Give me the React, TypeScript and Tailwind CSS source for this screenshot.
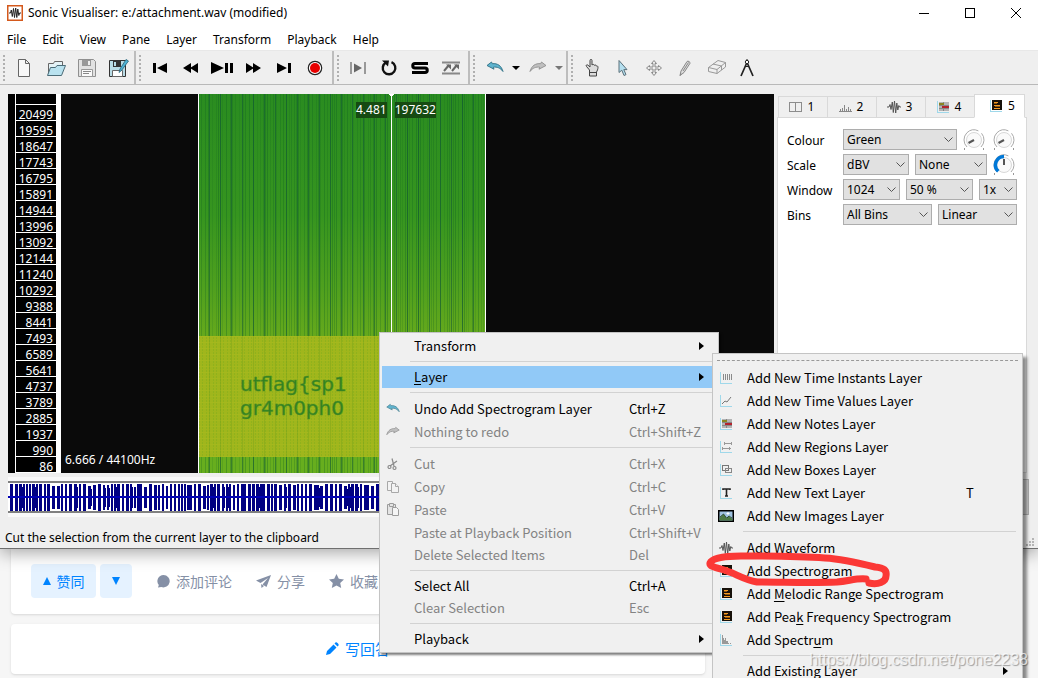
import React, { useState } from 'react';

interface MenuEntry {
  label: string;
  hot?: string;
  shortcut?: string;
  icon?: React.ReactNode;
  disabled?: boolean;
  submenu?: boolean;
  active?: boolean;
  tall?: boolean;
}

const frequencies = [
  20499, 19595, 18647, 17743, 16795, 15891, 14944, 13996, 13092, 12144, 11240, 10292,
  9388, 8441, 7493, 6589, 5641, 4737, 3789, 2885, 1937, 990, 86,
];

const menus = ['File', 'Edit', 'View', 'Pane', 'Layer', 'Transform', 'Playback', 'Help'];

// small deterministic generator so the signal looks the same on every render
const makeRandom = (seed: number) => () => {
  seed = (seed * 1103515245 + 12345) % 2147483648;
  return seed / 2147483648;
};

/* ---------- layer icons ---------- */

const Axes = ({ children }: { children?: React.ReactNode }) => (
  <svg width="16" height="16" viewBox="0 0 16 16" fill="none" shapeRendering="crispEdges">
    <path d="M2.5 2v11.5H14" stroke="#9fd8ea" />
    {children}
  </svg>
);

const InstantsIcon = () => (
  <Axes><path d="M5.5 4v6M7.5 4v6M9.5 4v6M11.5 4v6M13.5 4v6" stroke="#8a8a8a" /></Axes>
);

const ValuesIcon = () => (
  <Axes><path d="M4 11l3-3 2 1 4-5" stroke="#777" shapeRendering="auto" /></Axes>
);

const NotesIcon = () => (
  <Axes>
    <rect x="4" y="3" width="10" height="9" fill="#b4b4b4" />
    <path d="M4 6.5h10M4 9.5h10M8.5 3v9" stroke="#888" />
    <rect x="4" y="4" width="5" height="2" fill="#8a8420" />
    <rect x="7" y="7" width="7" height="2" fill="#b3222c" />
  </Axes>
);

const RegionsIcon = () => (
  <Axes><path d="M6 4.5h8M6.500 3v3M13.5 3v3M4 9.5h9M4.500 8v3M11.5 8v3" stroke="#999" /></Axes>
);

const BoxesIcon = () => (
  <Axes>
    <rect x="4.5" y="3.5" width="6" height="5" stroke="#777" />
    <rect x="7.5" y="6.5" width="6" height="4" rx="1" stroke="#888" />
  </Axes>
);

const TextIcon = () => (
  <Axes><path d="M5 5V4h7v1M8.5 4v7M7 11h3" stroke="#222" strokeWidth="1.6" shapeRendering="auto" /></Axes>
);

const ImageIcon = () => (
  <svg width="16" height="16" viewBox="0 0 16 16">
    <rect x="0.75" y="2.75" width="14.5" height="10.5" fill="#9fc2e0" stroke="#000" strokeWidth="1.5" />
    <path d="M1.5 12.5V10l4-4 3 4 2-2 4 3v1.5z" fill="#4d7a45" />
    <path d="M2 9l3.500-3 3 4M9 10l2-2 3 2" fill="none" stroke="#1f3b22" strokeWidth="0.8" />
    <path d="M10 4v3M8.500 5.500h3" stroke="#fff" />
  </svg>
);

const WaveIcon = () => (
  <svg width="16" height="16" viewBox="0 0 16 16" stroke="#555" fill="none">
    <path d="M1 8h2l1-2.500 1 5L6.300 3l1 10.500L8.500 2l1.200 12L10.800 4l1 7 1-4.500.8 1.500H15" strokeWidth="1" />
  </svg>
);

const SpectrogramIcon = () => (
  <Axes>
    <rect x="4" y="2" width="10" height="10" fill="#17110a" />
    <path d="M6 4.500h4M6 7.500h6M6 10.500h6" stroke="#f29a1f" />
    <path d="M6 5.500h3M7 8.500h5" stroke="#8a5512" />
  </Axes>
);

const SpectrumIcon = () => (
  <Axes><path d="M4.500 12V3M5.500 12V6M6.500 12V8M7.500 12V6M8.500 12v-3M9.500 12V9M10.500 12v-1M12.500 12v-1" stroke="#999" /></Axes>
);

const PaneIcon = () => (
  <svg width="16" height="16" viewBox="0 0 16 16" fill="none" stroke="#8c8c8c" shapeRendering="crispEdges">
    <rect x="1.500" y="3.500" width="12" height="9" /><path d="M7.500 3v10" />
  </svg>
);

const RulerIcon = () => (
  <svg width="16" height="16" viewBox="0 0 16 16" stroke="#888" shapeRendering="crispEdges">
    <path d="M2 12.500h13M3.500 10v2M5.500 9v3M7.500 6v6M9.500 10v2M11.500 8v4M13.500 10v2" />
  </svg>
);

/* ---------- edit icons ---------- */

const UndoIcon = ({ size = 18, fill = '#5fb4cf', stroke = '#2f6f85' }: { size?: number; fill?: string; stroke?: string }) => (
  <svg width={size} height={size} viewBox="0 0 18 18">
    <path d="M1 6.500L5.500 3l.8 1.700c5-.6 9.200 2 10.700 7.800-2.600-3.600-6-4.800-9.700-4.300l.7 2z" fill={fill} stroke={stroke} strokeWidth="0.900" />
  </svg>
);

const RedoIcon = ({ size = 18 }: { size?: number }) => (
  <svg width={size} height={size} viewBox="0 0 18 18">
    <path d="M17 6.500L12.500 3l-.8 1.700C6.700 4.100 2.500 6.700 1 12.500c2.600-3.600 6-4.800 9.700-4.300l-.7 2z" fill="#c0c0c0" stroke="#8f8f8f" strokeWidth="0.900" />
  </svg>
);

const CutIcon = () => (
  <svg width="14" height="14" viewBox="0 0 14 14" fill="none" stroke="#8a8a8a" strokeWidth="1.200">
    <path d="M6 1.500L8 9M11 4L4 9" /><circle cx="3.500" cy="10" r="1.500" /><circle cx="8.500" cy="11" r="1.500" />
  </svg>
);

const CopyIcon = () => (
  <svg width="14" height="14" viewBox="0 0 14 14" fill="#f3f3f3" stroke="#a8a8a8">
    <path d="M1.500 1.500h5v9h-5z" /><path d="M5.500 3.500h4l3 3v6h-7z" /><path d="M9.500 3.500v3h3" />
  </svg>
);

const PasteIcon = () => (
  <svg width="14" height="14" viewBox="0 0 14 14" fill="#e4e4e4" stroke="#9c9c9c">
    <path d="M1.500 1.500h8v10h-8z" /><path d="M3.500.5h4v3h-4z" /><path d="M6.500 4.500h4l2 2v6h-6z" fill="#f5f5f5" />
  </svg>
);

/* ---------- toolbar ---------- */

const tool = (name: string, drawing: React.ReactNode) => ({ name, drawing });

const fileTools = [
  tool('New Session', <path d="M3.500 1.500h7l4 4v13h-11zM10.500 1.500v4h4" fill="#f8f8f8" stroke="#666" />),
  tool('Open', <>
    <path d="M2.500 16.500V5.500h5l1-2h8v4" fill="#e4f2f6" stroke="#666" />
    <path d="M1.500 17.500l3-8h5l1.500-2h8.500l-4 10z" fill="#b9e2ef" stroke="#4b6c78" />
  </>),
  tool('Save', <>
    <path d="M1.500 1.500h15l2 2v15h-17z" fill="#e2e2e2" stroke="#909090" />
    <path d="M5 2h9v6H5z" fill="#999" /><path d="M11 3h2v4h-2z" fill="#eee" />
    <path d="M4.500 11.500h11v7h-11z" fill="#fafafa" stroke="#999" /><path d="M6 13.500h8M6 15.500h6" stroke="#888" />
  </>),
  tool('Save As', <>
    <path d="M1.500 2.500h16v16h-16z" fill="#b9dce6" stroke="#333" />
    <path d="M5 3h8v6H5z" fill="#333" /><path d="M6 4h2v4H6z" fill="#b9dce6" />
    <path d="M4.500 12.500h10v6h-10z" fill="#fff" stroke="#666" />
    <path d="M11 14.500l1-3.500 6-9.500 2.500 1.500-7 9.500z" fill="#4fb4d6" stroke="#276075" strokeWidth="0.800" />
  </>),
];

const playTools = [
  tool('Rewind to Start', <path d="M2 5h3v10H2zM16 5v10l-10-5z" fill="#000" />),
  tool('Rewind', <path d="M9 5v10L1 10zM16 5v10l-8-5z" fill="#000" />),
  tool('Play / Pause', <path d="M-2 4v12l13-6zM12 5h3v10h-3zM17 5h3v10h-3z" fill="#000" />),
  tool('Fast Forward', <path d="M2 5v10l8-5zM9 5v10l8-5z" fill="#000" />),
  tool('Fast Forward to End', <path d="M2 5v10l10-5zM13 5h3v10h-3z" fill="#000" />),
  tool('Record', <>
    <circle cx="9" cy="10" r="6.700" fill="#fff" stroke="#222" strokeWidth="1.200" />
    <circle cx="9" cy="10" r="5" fill="#e80000" />
  </>),
];

const modeTools = [
  tool('Constrain Playback', <><path d="M2 4v12M16 4v12" stroke="#999" strokeWidth="2" /><path d="M5 5.500v9l8-4.500z" fill="#666" /></>),
  tool('Loop Playback', <>
    <path d="M11.500 4.200a6.300 6.300 0 1 1-5.500.3" fill="none" stroke="#111" strokeWidth="2.400" />
    <path d="M2 2.500h7l-1 6z" fill="#111" />
  </>),
  tool('Solo Current Pane', <path d="M17 5.500H4a2 2 0 0 0 0 4.500h10a2.200 2.200 0 0 1 0 4.500H1" fill="none" stroke="#000" strokeWidth="3" />),
  tool('Align File Timelines', <>
    <path d="M0 4.500h18M0 15.500h18" stroke="#888" strokeWidth="2" />
    <path d="M2 13l5-6M10 13l5-6" stroke="#666" strokeWidth="2" />
    <path d="M4 6.500h5v5zM12 6.500h5v5z" fill="#666" />
  </>),
];

const editTools = [
  tool('Navigate', <path d="M6.500 12L3.500 8.500c-1-1.300.4-2.300 1.500-1.300l2 1.800V2.500c0-1.500 2-1.500 2 0V7c1-1 2.200-.6 2.300.3 1-.6 1.900-.2 2 .7 1-.3 1.700.2 1.700 1.200 0 2-.8 3.600-1.500 4.800v4h-7v-4zM6.500 14.500h7" fill="#dcdcdc" stroke="#444" />),
  tool('Select', <path d="M5 2.500v12l2.800-2.300 2.200 5.300 2-.9-2.200-5H13z" fill="#b5dfef" stroke="#5b707a" />),
  tool('Edit', <path d="M9 2.500l2.500 3h-1.500v3.500H13.500V7.500l3 2.500-3 2.500v-1.500H10v3.500h1.500l-2.500 3-2.500-3H8V11H4.500v1.500l-3-2.500 3-2.500V9H8V5.500H6.500z" fill="#eee" stroke="#888" />),
  tool('Draw', <><path d="M4 17.500l1-4.500 6-9.500c1-1 3.500.4 3 1.800l-6 9.200z" fill="#ddd" stroke="#888" /><path d="M7 13l5.500-8.500M4 17.500l1-2" stroke="#888" /></>),
  tool('Erase', <><path d="M1.500 9.500L11 2.500l7.500 2v4.500l-8.500 6.500-8.500-2z" fill="#efefef" stroke="#999" /><path d="M1.500 9.500l8.500 2 8.500-7M10 11.500v4M6 6l8.500 2v4" fill="none" stroke="#999" /></>),
  tool('Measure', <><path d="M8.500 5.500L3 18M9.500 5.500L15 18" stroke="#222" strokeWidth="1.700" /><circle cx="9" cy="4" r="1.700" fill="#fff" stroke="#222" /><path d="M9 1v2M7 8.500h4" stroke="#222" /></>),
];

type Tool = ReturnType<typeof tool>;

const ToolButton = ({ item }: { item: Tool }) => (
  <button aria-label={item.name} className="flex h-8 w-[31px] items-center justify-center">
    <svg width="20" height="20" viewBox="0 0 20 20" className="overflow-visible">{item.drawing}</svg>
  </button>
);

const DropArrow = ({ label, className }: { label: string; className: string }) => (
  <button aria-label={label} className="flex h-8 w-3 items-center justify-center">
    <svg width="8" height="4" viewBox="0 0 8 4" className={className}><path d="M0 0h8L4 4z" fill="currentColor" /></svg>
  </button>
);

const ToolGroup = ({ children, last }: { children: React.ReactNode; last?: boolean }) => (
  <div className={`flex items-center ${last ? '' : 'border-r-2 border-[#bdbdbd] pr-px'}`}>
    <svg width="9" height="28" viewBox="0 0 9 28" shapeRendering="crispEdges">
      <path d="M4 1v27" stroke="#b0b0b0" strokeWidth="2" strokeDasharray="2 2" />
    </svg>
    {children}
  </div>
);

/* ---------- pane ---------- */

function Spectrogram() {
  const rnd = makeRandom(7);
  const stripes: { x: number; o: number; w: number }[] = [];
  for (let x = 1; x < 286; x += 2 + Math.floor(rnd() * 3)) {
    stripes.push({ x, o: 0.12 + rnd() * 0.22, w: 1 });
  }
  const strong: number[] = [];
  for (let x = 11; x < 286; x += 11) strong.push(x);

  return (
    <svg width="288" height="379" viewBox="0 0 288 379" className="block shrink-0" shapeRendering="crispEdges">
      <defs>
        <linearGradient id="noise" x1="0" y1="0" x2="0" y2="1">
          <stop offset="0" stopColor="#2a8c20" />
          <stop offset="0.500" stopColor="#36951f" />
          <stop offset="0.800" stopColor="#4fa01e" />
          <stop offset="1" stopColor="#65a91c" />
        </linearGradient>
        <pattern id="weave" width="7" height="6" patternUnits="userSpaceOnUse">
          <path d="M1.500 0v6M4.500 0v6" stroke="#86b01c" strokeDasharray="2 1" />
          <path d="M0 2.500h7" stroke="#aebc20" opacity="0.500" />
        </pattern>
      </defs>
      <rect width="288" height="242" fill="url(#noise)" />
      <rect y="363" width="288" height="16" fill="#67ae1e" />
      {stripes.map((s) => <rect key={s.x} x={s.x} width={s.w} height="379" fill="#0b5e22" opacity={s.o} />)}
      {strong.map((x) => <rect key={x} x={x} width="1" height="379" fill="#0b4f38" opacity="0.500" />)}
      <rect y="242" width="288" height="121" fill="#a0b61c" />
      <rect y="242" width="288" height="121" fill="url(#weave)" opacity="0.600" />
      {strong.map((x) => <rect key={x} x={x} y="242" width="1" height="121" fill="#6b9a1c" opacity="0.300" />)}
      <g className="font-['DejaVu_Sans',sans-serif] text-xl" fill="#2f8022" stroke="#4f9022" strokeWidth="0.500">
        <text x="42" y="297">utflag&#123;sp1</text>
        <text x="42" y="321">gr4m0ph0</text>
      </g>
      <path d="M0.500 0v379M287.500 0v379M193.500 0v379" stroke="#fff" />
      <path d="M191 0h5l-2 3h-1z" fill="#fff" />
    </svg>
  );
}

function Pane() {
  return (
    <section className="flex min-w-0 flex-1 bg-[#0a0a0a]">
      <div className="flex border-r-5 border-white bg-black pl-[7px]">
        <ol className="w-[41px] border-b border-l border-white pt-[10px] text-right text-xs text-white">
          {frequencies.map((f) => (
            <li key={f} className="h-4 border-t border-white pr-[3px] leading-[19px]">{f}</li>
          ))}
        </ol>
      </div>
      <div className="relative flex min-w-0 flex-1 overflow-hidden text-xs leading-4 text-white">
        <div className="flex w-[137px] shrink-0 items-end pb-[5px] pl-1">
          <span className="whitespace-nowrap">6.666 / 44100Hz</span>
        </div>
        <Spectrogram />
        <div className="absolute top-2 left-[295px] flex gap-2">
          <span className="bg-[#164a12] leading-4">4.481</span>
          <span className="bg-[#164a12] leading-4">197632</span>
        </div>
      </div>
    </section>
  );
}

function Overview() {
  const rnd = makeRandom(31);
  let d = '';
  for (let x = 2; x < 1000;) {
    const w = rnd() < 0.1 ? 5 : 2 + Math.floor(rnd() * 2);
    const top = Math.floor(rnd() * rnd() * 4);
    d += `M${x} ${top + 1}h${w}v${27 - top * 2}h-${w}z`;
    if (rnd() < 0.3) d += `M${x + w} ${top + 4}h1v${21 - top * 2}h-1z`;
    x += w + 1 + (rnd() < 0.4 ? 0 : 1);
  }
  return (
    <div className="min-w-0 flex-1 overflow-hidden border-y-4 border-[#f9f9f9] bg-white">
      <svg height="32" className="block w-full border-y-2 border-[#808080]" shapeRendering="crispEdges">
        <path d={d} fill="#000082" />
        <path d="M0 14h1000" stroke="#0000b4" strokeWidth="2" />
      </svg>
    </div>
  );
}

/* ---------- properties ---------- */

const tabs = [
  { id: '1', icon: <PaneIcon /> },
  { id: '2', icon: <RulerIcon /> },
  { id: '3', icon: <WaveIcon /> },
  { id: '4', icon: <NotesIcon /> },
  { id: '5', icon: <SpectrogramIcon /> },
];

const Combo = ({ id, label, value, className }: { id?: string; label?: string; value: string; className: string }) => (
  <div className={`relative ${className}`}>
    <select
      id={id}
      aria-label={label}
      defaultValue={value}
      className="block h-[21px] w-full appearance-none rounded-none border border-[#adadad] bg-[#e1e1e1] pl-[3px] text-xs leading-4 text-black"
    >
      <option>{value}</option>
    </select>
    <svg width="9" height="6" viewBox="0 0 9 6" className="pointer-events-none absolute top-2 right-1" fill="none" stroke="#555">
      <path d="M0.500 0.500l4 4 4-4" />
    </svg>
  </div>
);

const Knob = ({ label, value }: { label: string; value: number }) => (
  <label className="relative block h-[21px] w-6">
    <svg width="24" height="21" viewBox="0 0 24 21" fill="none">
      <circle cx="11" cy="11" r="7.500" fill="#fafafa" stroke="#d8d8d8" />
      <path d="M4 18A10 10 0 1 1 18 18" stroke="#aaa" strokeDasharray="28 4" />
      <path d="M1 20h1M20 20h1" stroke="#333" />
      {value ? (
        <>
          <path d="M5.300 17.300A8.500 8.500 0 0 1 11 2.500" stroke="#0078d7" strokeWidth="3.500" />
          <path d="M11 5v6" stroke="#555" strokeWidth="2" />
        </>
      ) : (
        <path d="M5.500 14L11 11" stroke="#555" strokeWidth="2" />
      )}
    </svg>
    <input type="range" aria-label={label} defaultValue={value} className="absolute inset-0 h-full w-full opacity-0" />
  </label>
);

const PropertyRow = ({ id, label, children }: { id: string; label: string; children: React.ReactNode }) => (
  <div className="flex h-[25px]">
    <label htmlFor={id} className="w-14 pt-1 text-xs leading-4">{label}</label>
    <div className="flex flex-1 gap-1.5">{children}</div>
  </div>
);

function Properties() {
  const [tab, setTab] = useState('5');

  return (
    <aside className="flex w-[250px] shrink-0 flex-col">
      <div role="tablist" className="relative z-10 -mb-px flex h-6 items-end pl-px text-xs">
        {tabs.map((t) => (
          <button
            key={t.id}
            role="tab"
            aria-selected={tab === t.id}
            onClick={() => setTab(t.id)}
            className={`flex items-center justify-center gap-1 border border-[#d9d9d9] ${
              tab === t.id ? 'h-6 w-[51px] border-b-white bg-white pl-1' : 'h-[22px] w-[49px] border-r-0 pr-1'
            }`}
          >
            {t.icon}
            <span>{t.id}</span>
          </button>
        ))}
      </div>
      <div className="flex-1 border border-[#d9d9d9] bg-white pt-[11px] pl-[9px]">
        <PropertyRow id="colour" label="Colour">
          <Combo id="colour" value="Green" className="w-[114px]" />
          <Knob label="Threshold" value={0} />
          <Knob label="Colour rotation" value={0} />
        </PropertyRow>
        <PropertyRow id="scale" label="Scale">
          <Combo id="scale" value="dBV" className="w-[66px]" />
          <Combo label="Normalization" value="None" className="w-[72px]" />
          <Knob label="Gain" value={50} />
        </PropertyRow>
        <PropertyRow id="window" label="Window">
          <Combo id="window" value="1024" className="w-[57px]" />
          <Combo label="Window overlap" value="50 %" className="w-[67px]" />
          <Combo label="Oversampling" value="1x" className="w-[38px]" />
        </PropertyRow>
        <PropertyRow id="bins" label="Bins">
          <Combo id="bins" value="All Bins" className="w-[89px]" />
          <Combo label="Frequency scale" value="Linear" className="w-[79px]" />
        </PropertyRow>
      </div>
    </aside>
  );
}

/* ---------- context menus ---------- */

const contextMenu: (MenuEntry | null)[] = [
  { label: 'Transform', submenu: true },
  null,
  { label: 'Layer', hot: 'L', submenu: true, active: true },
  null,
  { label: 'Undo Add Spectrogram Layer', shortcut: 'Ctrl+Z', icon: <UndoIcon size={14} stroke="#4d8392" />, tall: true },
  { label: 'Nothing to redo', shortcut: 'Ctrl+Shift+Z', icon: <RedoIcon size={14} />, disabled: true, tall: true },
  null,
  { label: 'Cut', shortcut: 'Ctrl+X', icon: <CutIcon />, disabled: true, tall: true },
  { label: 'Copy', shortcut: 'Ctrl+C', icon: <CopyIcon />, disabled: true, tall: true },
  { label: 'Paste', shortcut: 'Ctrl+V', icon: <PasteIcon />, disabled: true, tall: true },
  { label: 'Paste at Playback Position', shortcut: 'Ctrl+Shift+V', disabled: true, tall: true },
  { label: 'Delete Selected Items', shortcut: 'Del', disabled: true },
  null,
  { label: 'Select All', shortcut: 'Ctrl+A' },
  { label: 'Clear Selection', shortcut: 'Esc', disabled: true },
  null,
  { label: 'Playback', submenu: true },
];

const layerMenu: (MenuEntry | null)[] = [
  { label: 'Add New Time Instants Layer', icon: <InstantsIcon />, tall: true },
  { label: 'Add New Time Values Layer', icon: <ValuesIcon />, tall: true },
  { label: 'Add New Notes Layer', icon: <NotesIcon />, tall: true },
  { label: 'Add New Regions Layer', icon: <RegionsIcon />, tall: true },
  { label: 'Add New Boxes Layer', icon: <BoxesIcon />, tall: true },
  { label: 'Add New Text Layer', icon: <TextIcon />, shortcut: 'T', tall: true },
  { label: 'Add New Images Layer', icon: <ImageIcon />, tall: true },
  null,
  { label: 'Add Waveform', hot: 'W', icon: <WaveIcon />, tall: true },
  { label: 'Add Spectrogram', hot: 'g', icon: <SpectrogramIcon />, tall: true },
  { label: 'Add Melodic Range Spectrogram', hot: 'M', icon: <SpectrogramIcon />, tall: true },
  { label: 'Add Peak Frequency Spectrogram', hot: 'k', icon: <SpectrogramIcon />, tall: true },
  { label: 'Add Spectrum', hot: 'u', icon: <SpectrumIcon />, tall: true },
  null,
  { label: 'Add Existing Layer', hot: 'E', submenu: true },
];

const HotLabel = ({ label, hot }: { label: string; hot?: string }) => {
  const at = hot ? label.indexOf(hot) : -1;
  if (at < 0) return <>{label}</>;
  return <>{label.slice(0, at)}<u className="underline-offset-2">{hot}</u>{label.slice(at + 1)}</>;
};

const MenuList = ({ items, shortcutClass }: { items: (MenuEntry | null)[]; shortcutClass: string }) => (
  <>
    {items.map((item, i) => item === null ? (
      <hr key={i} className="my-1 mr-1 ml-7 border-[#d2d2d2]" />
    ) : (
      <button
        key={i}
        role="menuitem"
        disabled={item.disabled}
        className={`flex w-full items-center text-left ${item.tall ? 'h-[23px]' : 'h-[22px]'} ${
          item.active ? 'bg-[#91c9f7]' : ''
        } ${item.disabled ? 'text-[#838383]' : 'text-black'}`}
      >
        <span className="flex w-[22px] justify-center">{item.icon}</span>
        <span className="flex-1 pl-[10px] whitespace-nowrap"><HotLabel label={item.label} hot={item.hot} /></span>
        {item.shortcut && <span className={shortcutClass}>{item.shortcut}</span>}
        {item.submenu && (
          <svg width="5" height="8" viewBox="0 0 5 8" className="mr-3"><path d="M0 0l5 4-5 4z" fill="#000" /></svg>
        )}
      </button>
    ))}
  </>
);

/* ---------- page behind the window ---------- */

function AnswerPage() {
  return (
    <main className="w-[694px] pl-[11px] font-['Noto_Sans_CJK_SC',sans-serif] text-sm box-content">
      <section className="flex items-center rounded-b-sm bg-white px-5 pt-[15px] pb-4 text-[#8590a6] shadow-sm">
        <button className="flex h-[34px] w-[65px] items-center justify-center gap-1.5 rounded-sm bg-[#e5f2ff] text-[#0084ff]">
          <svg width="8" height="8" viewBox="0 0 8 8" fill="currentColor"><path d="M4 0l4 8H0z" /></svg>
          赞同
        </button>
        <button aria-label="反对" className="ml-1 flex h-[34px] w-8 items-center justify-center rounded-sm bg-[#e5f2ff] text-[#0084ff]">
          <svg width="8" height="8" viewBox="0 0 8 8" fill="currentColor"><path d="M4 8L0 0h8z" /></svg>
        </button>
        <button className="ml-[25px] flex items-center gap-1.5">
          <svg width="13" height="13" viewBox="0 0 13 13" fill="currentColor"><path d="M6.500 0a6.200 6.200 0 1 1-2.200 12L1 12.600l.8-2.500A6.200 6.200 0 0 1 6.500 0z" /></svg>
          添加评论
        </button>
        <button className="ml-6 flex items-center gap-1.5">
          <svg width="15" height="13" viewBox="0 0 15 13" fill="currentColor"><path d="M0 5.500L15 0l-4.500 12-4-2.500L12 3 4.500 8zM5 9l3 2-2.500 2z" /></svg>
          分享
        </button>
        <button className="ml-6 flex items-center gap-1.5">
          <svg width="15" height="14" viewBox="0 0 15 14" fill="currentColor"><path d="M7.500 0l2.300 4.700 5.200.7-3.800 3.500 1 5.100-4.700-2.500L2.800 14l1-5.100L0 5.400l5.200-.7z" /></svg>
          收藏
        </button>
      </section>
      <section className="mt-[10px] flex h-[50px] items-center justify-center rounded-sm bg-white text-[15px] text-[#0084ff] shadow-sm">
        <button className="flex items-center gap-1.5">
          <svg width="13" height="13" viewBox="0 0 13 13" fill="currentColor"><path d="M0 13l1-4 6.500-6.500 3 3L4 12zM8.500 1.500l1-1c1-1 4 1.800 3 3l-1 1z" /></svg>
          写回答
        </button>
      </section>
    </main>
  );
}

export default function App() {
  return (
    <div className="relative h-screen overflow-hidden bg-[#f6f6f6] font-['Noto_Sans','Noto_Sans_CJK_SC',sans-serif] text-black">
      <div className="relative border-b border-[#6f6f6f] bg-[#efefef] shadow-[0_4px_16px_rgba(0,0,0,0.35)]">
        <header className="bg-white text-xs">
          <div className="flex h-[26px] items-center pl-[7px]">
            <svg width="16" height="16" viewBox="0 0 16 16" fill="none">
              <rect x="0.750" y="0.750" width="14.500" height="14.500" fill="#fff" stroke="#d4591c" strokeWidth="1.500" />
              <path d="M2 8h1.500l.8-3 1 6.500L6.500 3.500l1 9L8.700 3l1.100 9.500 1-8.500 1 6.500.8-2.500H14" stroke="#222" />
            </svg>
            <h1 className="flex-1 pl-[5px]">Sonic Visualiser: e:/attachment.wav (modified)</h1>
            <div className="flex pr-4">
              <button aria-label="Minimize" className="flex h-6 w-[46px] items-center justify-end">
                <svg width="12" height="12" viewBox="0 0 12 12" stroke="#000" shapeRendering="crispEdges"><path d="M1 6.500h10" /></svg>
              </button>
              <button aria-label="Maximize" className="flex h-6 w-[46px] items-center justify-end">
                <svg width="12" height="12" viewBox="0 0 12 12" stroke="#000" fill="none" shapeRendering="crispEdges"><path d="M1.500 1.500h9v9h-9z" /></svg>
              </button>
              <button aria-label="Close" className="flex h-6 w-[46px] items-center justify-end">
                <svg width="12" height="12" viewBox="0 0 12 12" stroke="#000"><path d="M1 1l10 10M11 1L1 11" /></svg>
              </button>
            </div>
          </div>
          <nav className="flex h-[25px] items-center gap-4 border-b border-[#e8e8e8] pt-1 pl-[7px]">
            {menus.map((m) => <button key={m}>{m}</button>)}
          </nav>
        </header>

        <div role="toolbar" className="flex h-[34px] border-b border-[#b9b9b9]">
          <ToolGroup>{fileTools.map((t) => <ToolButton key={t.name} item={t} />)}</ToolGroup>
          <ToolGroup>{playTools.map((t) => <ToolButton key={t.name} item={t} />)}</ToolGroup>
          <ToolGroup>{modeTools.map((t) => <ToolButton key={t.name} item={t} />)}</ToolGroup>
          <ToolGroup>
            <button aria-label="Undo" className="flex h-8 w-[31px] items-center justify-center"><UndoIcon /></button>
            <DropArrow label="Undo history" className="text-black" />
            <button aria-label="Redo" className="flex h-8 w-[31px] items-center justify-center"><RedoIcon /></button>
            <DropArrow label="Redo history" className="text-[#777]" />
          </ToolGroup>
          <ToolGroup last>{editTools.map((t) => <ToolButton key={t.name} item={t} />)}</ToolGroup>
        </div>

        <div className="flex gap-[3px] pt-[9px] pr-[11px] pl-2">
          <Pane />
          <Properties />
        </div>

        <div className="mt-1 flex gap-1 pr-[9px] pl-2">
          <Overview />
          <div className="my-0.5 w-10 border border-[#adadad] bg-[#d0d0d0]" />
        </div>

        <footer className="flex h-[31px] items-end justify-between pr-1 pb-0.5 pl-[5px] text-xs">
          <p>Cut the selection from the current layer to the clipboard</p>
          <svg width="8" height="8" viewBox="0 0 8 8" fill="#b5b5b5">
            <path d="M6 0h2v2H6zM3 3h2v2H3zM6 3h2v2H6zM0 6h2v2H0zM3 6h2v2H3zM6 6h2v2H6z" />
          </svg>
        </footer>
      </div>

      <AnswerPage />

      <div
        role="menu"
        className="absolute top-[332px] left-[379px] w-[340px] border border-[#c4c4c4] bg-[#f0f0f0] px-0.5 py-0.5 font-['Noto_Sans_CJK_SC',sans-serif] text-[13px] shadow-[2px_2px_2px_rgba(0,0,0,0.5)]"
      >
        <MenuList items={contextMenu} shortcutClass="w-[87px] whitespace-nowrap" />
      </div>

      <div
        role="menu"
        className="absolute top-[353px] left-[712px] w-[311px] border border-[#c4c4c4] bg-[#f0f0f0] px-0.5 pb-0.5 font-['Noto_Sans_CJK_SC',sans-serif] text-[13px] shadow-[4px_4px_3px_rgba(0,0,0,0.45)]"
      >
        <div className="mx-0.5 mt-1.5 mb-[5px] border-t border-dashed border-[#999]" />
        <MenuList items={layerMenu} shortcutClass="w-[54px]" />
      </div>

      {/* hand-drawn marker around the spectrogram entry */}
      <svg width="190" height="40" viewBox="0 0 190 40" className="pointer-events-none absolute top-[550px] left-[704px]" fill="none">
        <path
          d="M165 33c9 2 17-1 17-7 1-6-2-8-11-9-16-4-32-8-50-9-28-2-56-2-84-2C22 6 8 8 6 13c-1 4 8 5 17 8 9 3 18 9 30 11 27 0 54 1 80 0 12-1 20-4 29-3"
          stroke="#fb3836" strokeWidth="7" strokeLinecap="round" strokeLinejoin="round"
        />
      </svg>

      <p className="pointer-events-none absolute right-[10px] bottom-2 font-['Liberation_Sans',sans-serif] text-base leading-5 text-white/70 [text-shadow:1px_1px_1px_rgba(0,0,0,0.35)]">
        https://blog.csdn.net/pone2238
      </p>
    </div>
  );
}
